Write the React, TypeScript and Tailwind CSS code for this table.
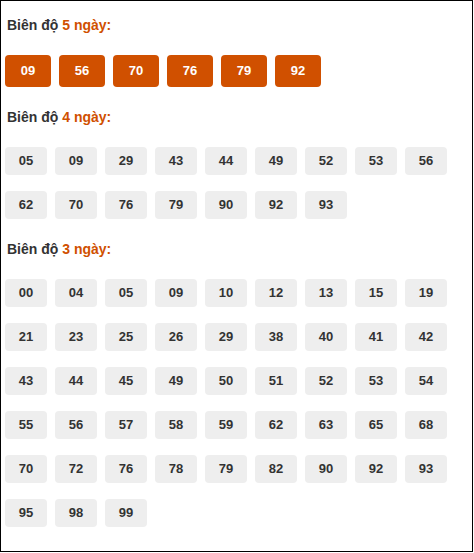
import React from "react";

const d5 = ["09", "56", "70", "76", "79", "92"];
const d4 = ["05", "09", "29", "43", "44", "49", "52", "53", "56", "62", "70", "76", "79", "90", "92", "93"];
const d3 = [
  "00", "04", "05", "09", "10", "12", "13", "15", "19",
  "21", "23", "25", "26", "29", "38", "40", "41", "42",
  "43", "44", "45", "49", "50", "51", "52", "53", "54",
  "55", "56", "57", "58", "59", "62", "63", "65", "68",
  "70", "72", "76", "78", "79", "82", "90", "92", "93",
  "95", "98", "99",
];

function Heading({ n }: { n: number }) {
  return (
    <div className="h-5 pl-[2px] flex items-center text-[14px] font-bold text-[#333]">
      Biên độ&nbsp;<span className="text-[#d05000]">{n} ngày:</span>
    </div>
  );
}

export default function App() {
  return (
    <div
      className="w-[473px] h-[552px] border border-black bg-white pl-[4px] pt-[14px]"
      style={{ fontFamily: '"Liberation Sans", Arial, sans-serif' }}
    >
      <Heading n={5} />
      <div className="mt-5 flex flex-wrap gap-x-2">
        {d5.map((v) => (
          <div
            key={v}
            className="w-[46px] h-[32px] rounded-[4px] bg-[#d05000] text-white text-[13px] font-bold flex items-center justify-center"
          >
            {v}
          </div>
        ))}
      </div>
      <div className="mt-5">
        <Heading n={4} />
      </div>
      <div className="mt-5 flex flex-wrap gap-x-2 gap-y-4 w-[460px]">
        {d4.map((v, i) => (
          <div
            key={i}
            className="w-[42px] h-[28px] rounded-[4px] bg-[#eeeeee] text-[#333] text-[13px] font-bold flex items-center justify-center"
          >
            {v}
          </div>
        ))}
      </div>
      <div className="mt-5">
        <Heading n={3} />
      </div>
      <div className="mt-5 flex flex-wrap gap-x-2 gap-y-4 w-[460px]">
        {d3.map((v, i) => (
          <div
            key={i}
            className="w-[42px] h-[28px] rounded-[4px] bg-[#eeeeee] text-[#333] text-[13px] font-bold flex items-center justify-center"
          >
            {v}
          </div>
        ))}
      </div>
    </div>
  );
}
